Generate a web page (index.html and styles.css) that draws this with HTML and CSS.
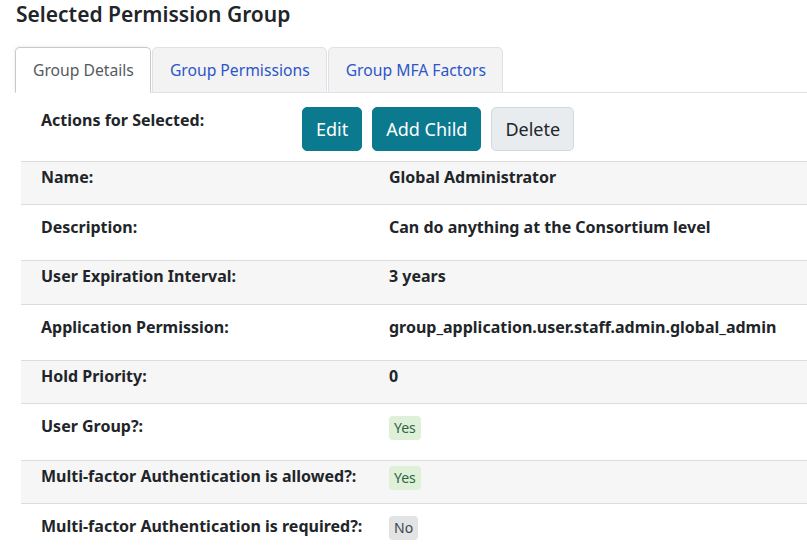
FILE: index.html
```html
<!DOCTYPE html>
<html lang="en">
<head>
<meta charset="utf-8">
<title>Selected Permission Group</title>
<link rel="stylesheet" href="styles.css">
</head>
<body>
<div class="page">
  <h3 class="title">Selected Permission Group</h3>
  <ul class="tabs">
    <li class="tab active">Group Details</li>
    <li class="tab">Group Permissions</li>
    <li class="tab">Group MFA Factors</li>
  </ul>
  <div class="panel">
    <div class="actions">
      <div class="actions-label">Actions for Selected:</div>
      <div class="btns">
        <button class="btn btn-teal">Edit</button>
        <button class="btn btn-teal">Add Child</button>
        <button class="btn btn-light">Delete</button>
      </div>
    </div>
    <div class="row striped"><div class="lbl">Name:</div><div class="val">Global Administrator</div></div>
    <div class="row plain"><div class="lbl">Description:</div><div class="val">Can do anything at the Consortium level</div></div>
    <div class="row striped extra"><div class="lbl">User Expiration Interval:</div><div class="val">3 years</div></div>
    <div class="row plain"><div class="lbl">Application Permission:</div><div class="val">group_application.user.staff.admin.global_admin</div></div>
    <div class="row striped"><div class="lbl">Hold Priority:</div><div class="val">0</div></div>
    <div class="row plain extra"><div class="lbl">User Group?:</div><div class="val"><span class="badge badge-yes">Yes</span></div></div>
    <div class="row striped"><div class="lbl">Multi-factor Authentication is allowed?:</div><div class="val"><span class="badge badge-yes">Yes</span></div></div>
    <div class="row plain"><div class="lbl">Multi-factor Authentication is required?:</div><div class="val"><span class="badge badge-no">No</span></div></div>
  </div>
</div>
</body>
</html>
```

FILE: styles.css
```css
html, body {
  margin: 0;
  padding: 0;
  background: #ffffff;
}
body {
  font-family: "Segoe UI", "Noto Sans", "Open Sans", sans-serif;
  font-size: 16px;
  line-height: 24px;
  color: #212529;
  overflow: hidden;
}
.page {
  padding-left: 15px;
}
.title {
  margin: 0;
  font-size: 21px;
  line-height: 28px;
  font-weight: 600;
  color: #212529;
  padding-left: 1px;
}
.tabs {
  list-style: none;
  margin: 19px 0 0 0;
  padding: 0;
  display: flex;
  gap: 1px;
  border-bottom: 1px solid #dee2e6;
}
.tab {
  margin-bottom: -1px;
  padding: 10px 16px 10px 17px;
  border: 1px solid #dee2e6;
  border-radius: 5px 5px 0 0;
  background: #f3f3f3;
  color: #2c56c9;
  font-size: 15.7px;
}
.tab.active {
  background: #ffffff;
  color: #555b61;
  border-color: #c9c9c9 #c9c9c9 #ffffff;
  box-shadow: -1px -1px 3px rgba(0, 0, 0, 0.06);
}
.panel {
  padding-left: 6px;
}
.actions {
  display: flex;
  align-items: flex-start;
  padding: 14px 0 10px 20px;
}
.actions-label {
  width: 261px;
  font-weight: 700;
  padding-top: 1px;
}
.btns {
  display: flex;
  gap: 10px;
}
.btn {
  height: 44px;
  padding: 0 13px;
  font-family: inherit;
  font-size: 18px;
  border-radius: 5px;
  border: 1px solid transparent;
  cursor: pointer;
}
.btn-teal {
  background: #0b7a8f;
  border-color: #0b7a8f;
  color: #ffffff;
}
.btn-light {
  background: #e9ecef;
  border-color: #d6d9dc;
  color: #212529;
}
.row {
  display: flex;
  border-top: 1px solid #dcdcdc;
  padding-left: 20px;
  font-weight: 700;
}
.row.striped {
  background: #f6f6f6;
  padding-top: 3px;
  padding-bottom: 15px;
}
.row.plain {
  padding-top: 10px;
  padding-bottom: 21px;
}
.row.striped.extra {
  padding-bottom: 16px;
}
.row.plain.extra {
  padding-bottom: 22px;
}
.lbl {
  width: 348px;
  flex: none;
}
.val {
  white-space: nowrap;
}
.badge {
  display: inline-block;
  vertical-align: top;
  margin-top: 2px;
  margin-bottom: -2px;
  padding: 0 5px;
  line-height: 24px;
  border-radius: 4px;
  font-size: 14px;
  font-weight: 400;
}
.badge-yes {
  background: #dff0d8;
  color: #2f6346;
}
.badge-no {
  background: #e2e3e5;
  color: #41464b;
}
```
